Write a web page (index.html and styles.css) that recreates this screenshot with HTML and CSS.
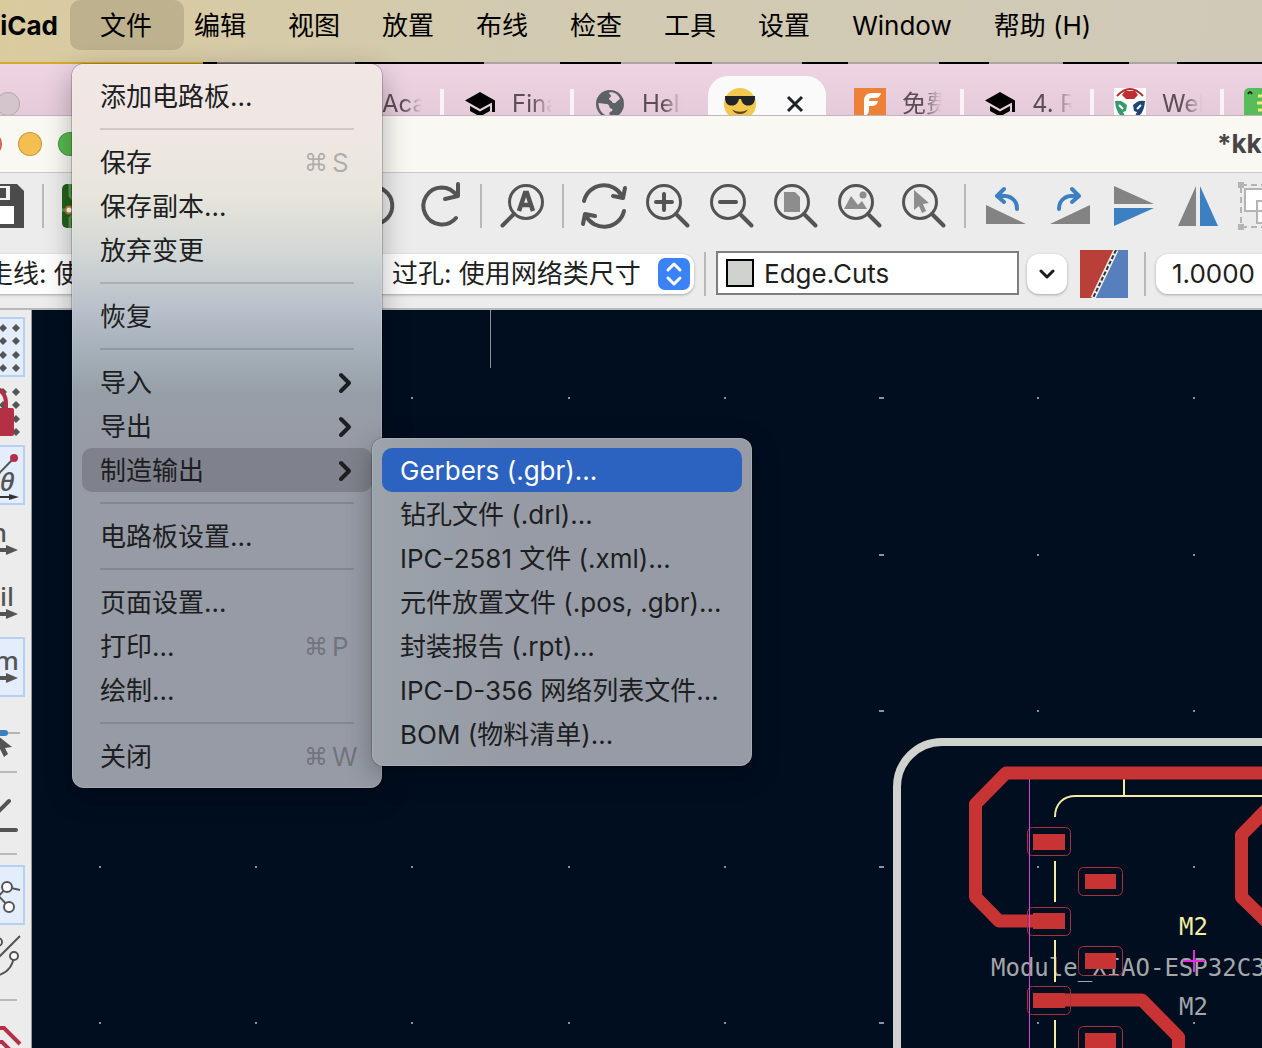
FILE: index.html
```html
<!DOCTYPE html>
<html lang="zh-CN">
<head>
<meta charset="utf-8">
<title>KiCad</title>
<link rel="stylesheet" href="styles.css">
</head>
<body>
<svg class="defs" aria-hidden="true">
  <defs>
    <symbol id="lens" viewBox="0 0 48 48"><circle cx="20" cy="20" r="16.500" fill="none" stroke="#545454" stroke-width="3"/><path d="M32 32 43.500 43.500" stroke="#545454" stroke-width="4" stroke-linecap="round"/></symbol>
    <symbol id="cap" viewBox="0 0 32 32"><path d="M16 4 31 12.500V24H28V14.500L16 21 1 12.500Z M6 18 16 23.500 26 18V23L16 28.500 6 23Z" fill="#000"/></symbol>
    <symbol id="chev" viewBox="0 0 16 24"><path d="M3 4 11 12 3 20" fill="none" stroke="#1c1e21" stroke-width="4" stroke-linecap="round" stroke-linejoin="round"/></symbol>
  </defs>
</svg>

<nav class="menubar" aria-label="菜单栏">
  <button class="menubar-item app">KiCad</button>
  <div class="menubar-entry">
    <button class="menubar-item open">文件</button>
    <div class="menu file-menu">
      <button class="item">添加电路板...</button>
      <hr>
      <button class="item">保存<span class="keys"><span class="cmd">⌘</span>S</span></button>
      <button class="item">保存副本...</button>
      <button class="item">放弃变更</button>
      <hr>
      <button class="item">恢复</button>
      <hr>
      <button class="item">导入<svg class="chev"><use href="#chev"/></svg></button>
      <button class="item">导出<svg class="chev"><use href="#chev"/></svg></button>
      <div class="sub-entry">
        <button class="item parent">制造输出<svg class="chev"><use href="#chev"/></svg></button>
        <div class="menu submenu">
          <button class="item selected">Gerbers (.gbr)...</button>
          <button class="item">钻孔文件 (.drl)...</button>
          <button class="item">IPC-2581 文件 (.xml)...</button>
          <button class="item">元件放置文件 (.pos, .gbr)...</button>
          <button class="item">封装报告 (.rpt)...</button>
          <button class="item">IPC-D-356 网络列表文件...</button>
          <button class="item">BOM (物料清单)...</button>
        </div>
      </div>
      <hr>
      <button class="item">电路板设置...</button>
      <hr>
      <button class="item">页面设置...</button>
      <button class="item">打印...<span class="keys"><span class="cmd">⌘</span>P</span></button>
      <button class="item">绘制...</button>
      <hr>
      <button class="item">关闭<span class="keys"><span class="cmd">⌘</span>W</span></button>
    </div>
  </div>
  <button class="menubar-item">编辑</button>
  <button class="menubar-item">视图</button>
  <button class="menubar-item">放置</button>
  <button class="menubar-item">布线</button>
  <button class="menubar-item">检查</button>
  <button class="menubar-item">工具</button>
  <button class="menubar-item">设置</button>
  <button class="menubar-item">Window</button>
  <button class="menubar-item">帮助 (H)</button>
</nav>

<div class="tabstrip">
  <span class="browser-dot"></span>
  <div class="tab first"><span class="tab-title">Aca</span></div>
  <div class="tab"><svg class="favicon"><use href="#cap"/></svg><span class="tab-title">Fina</span></div>
  <div class="tab last"><svg class="favicon" viewBox="0 0 32 32"><circle cx="16" cy="16" r="14" fill="#5c6166"/><path d="M15 4.500c5-1 9 2 11 6-1 2-3 2-4 4-1 1-4 1-4-1 0-1-3-1-3-3 0-1 2-1 2-3 0-1-2-1-2-3zM4.500 15c3 0 5 1 8 1 2 0 3 2 3 3 0 2 3 1 3 3s-3 1-3 3v3c-6 0-11-6-11-13z" fill="#e8cfdd"/></svg><span class="tab-title">Help</span></div>
  <div class="tab active"><svg class="favicon" viewBox="0 0 32 32"><circle cx="16" cy="16" r="16" fill="#f2c84f"/><path d="M1 8H31V11C30 16 28 17.500 24 17.500 20 17.500 18 15 17 11H15C14 15 12 17.500 8 17.500 4 17.500 2 16 1 11Z" fill="#222427"/><path d="M8 21.500Q16 26 24 21.500 21 26 16 26 11 26 8 21.500Z" fill="#5f4416"/></svg><button class="tab-close" aria-label="关闭标签页"><svg viewBox="0 0 18 18"><path d="M2 2 16 16M16 2 2 16" stroke="#202124" stroke-width="3"/></svg></button></div>
  <div class="tab"><svg class="favicon" viewBox="0 0 32 32"><path d="M0 0H32V32H0Z" fill="#ee8138"/><path d="M10 28V13Q10 5 18 5H27Q26 10 21 10H17Q15 10 15 13H24Q23 18 18 18H15V22Q15 27 10 28Z" fill="#fff"/></svg><span class="tab-title">免费</span></div>
  <div class="tab"><svg class="favicon"><use href="#cap"/></svg><span class="tab-title">4. R</span></div>
  <div class="tab"><svg class="favicon" viewBox="0 0 32 32"><path d="M0 0H32V32H0Z" fill="#fff"/><path d="M3 8Q16-6 29 8" fill="none" stroke="#b52c30" stroke-width="2"/><path d="M11 3h10l3 4-4 4h-8l-4-4z" fill="#bf2d30"/><path d="M1 13q5-1 8 1l4 3-1 6-3 1 3 6q-10-2-11-17z" fill="#389a69"/><path d="M31 13q-5-1-8 1l-4 3 1 6 3 1-3 6q10-2 11-17z" fill="#1f4473"/><path d="M5 17l4 4M27 17l-4 4" fill="none" stroke="#fff" stroke-width="2"/></svg><span class="tab-title">Wel</span></div>
  <div class="tab"><svg class="favicon" viewBox="0 0 32 32"><rect width="32" height="32" rx="5" fill="#57bd5b"/><path d="M4 6q2-4 4 0" fill="none" stroke="#222" stroke-width="2"/><path d="M14 8h6M13 15h8M14 22h6" stroke="#f4ed71" stroke-width="3"/></svg></div>
</div>

<header class="titlebar">
  <div class="lights"><button class="light red" aria-label="关闭"></button><button class="light yellow" aria-label="最小化"></button><button class="light green" aria-label="缩放"></button></div>
  <h1 class="title">*kka</h1>
</header>

<div class="toolbar icons">
  <button class="tool" aria-label="保存"><svg viewBox="0 0 48 48"><path d="M4 2H39L46 9V46H4Z" fill="#4b4b4b"/><path d="M12 4H32V18H12Z" fill="#f4f4f4"/><path d="M22 6H28V16H22Z" fill="#4b4b4b"/><path d="M10 24H36V42H10Z" fill="#fff"/></svg></button>
  <span class="sep"></span>
  <button class="tool" aria-label="电路板设置"><svg viewBox="0 0 48 48"><rect x="2" y="2" width="44" height="44" rx="5" fill="#23611c"/><path d="M10 2V14L14 18M2 28H9M10 46V36L14 32" fill="none" stroke="#5b9a4d" stroke-width="3"/><circle cx="9" cy="28" r="3.500" fill="#fff" stroke="#c07a3a" stroke-width="2"/></svg></button>
  <button class="tool undo" aria-label="撤消"><svg viewBox="0 0 48 48"><path d="M6 2V14L19 17M6 14A18.500 18.500 0 1 1 8 36" fill="none" stroke="#545454" stroke-width="4" stroke-linecap="round"/></svg></button>
  <button class="tool" aria-label="重做"><svg viewBox="0 0 48 48"><path d="M42 2V14L29 17M41 14C37 8 32 5.500 25.500 5.500A18.500 18.500 0 1 0 40 36" fill="none" stroke="#545454" stroke-width="4" stroke-linecap="round" stroke-linejoin="round"/></svg></button>
  <span class="sep"></span>
  <button class="tool" aria-label="查找"><svg viewBox="0 0 48 48"><circle cx="28" cy="20" r="16.500" fill="none" stroke="#545454" stroke-width="3"/><path d="M16 32 4.500 43.500" stroke="#545454" stroke-width="4" stroke-linecap="round"/><path d="M21 29 27 11H29L35 29M23 23H33" fill="none" stroke="#545454" stroke-width="4.500"/></svg></button>
  <span class="sep"></span>
  <button class="tool" aria-label="刷新"><svg viewBox="0 0 48 48"><g fill="none" stroke="#545454" stroke-width="4" stroke-linecap="round" stroke-linejoin="round"><path d="M4 19A20.500 20.500 0 0 1 42 14M45 6 43 16 33 14"/><path d="M44 29A20.500 20.500 0 0 1 6 34M3 42 5 32 15 34"/></g></svg></button>
  <button class="tool" aria-label="放大"><svg viewBox="0 0 48 48"><use href="#lens"/><path d="M20 12V28M12 20H28" stroke="#545454" stroke-width="4" stroke-linecap="round"/></svg></button>
  <button class="tool" aria-label="缩小"><svg viewBox="0 0 48 48"><use href="#lens"/><path d="M12 20H28" stroke="#545454" stroke-width="4" stroke-linecap="round"/></svg></button>
  <button class="tool" aria-label="缩放到页面"><svg viewBox="0 0 48 48"><use href="#lens"/><path d="M12 10H23L28 15V30H12Z" fill="#8d8d8d"/></svg></button>
  <button class="tool" aria-label="缩放到对象"><svg viewBox="0 0 48 48"><use href="#lens"/><path d="M8 27 15 14 22 23 26 19 31 27Z" fill="#8d8d8d"/><circle cx="27" cy="13" r="3.500" fill="#8d8d8d"/></svg></button>
  <button class="tool" aria-label="缩放到所选"><svg viewBox="0 0 48 48"><use href="#lens"/><path d="M14 8V28L19 24 22 31 26 29 23 22 29 21Z" fill="#8d8d8d"/></svg></button>
  <span class="sep"></span>
  <button class="tool" aria-label="逆时针旋转"><svg viewBox="0 0 48 48"><path d="M4 23V42H44Z" fill="#838383"/><path d="M35 27C35 18 29 13 17 14M22 7 15 14 22 20" fill="none" stroke="#3d80c2" stroke-width="4" stroke-linecap="round" stroke-linejoin="round"/></svg></button>
  <button class="tool" aria-label="顺时针旋转"><svg viewBox="0 0 48 48"><path d="M44 23V42H4Z" fill="#838383"/><path d="M13 27C13 18 19 13 31 14M26 7 33 14 26 20" fill="none" stroke="#3d80c2" stroke-width="4" stroke-linecap="round" stroke-linejoin="round"/></svg></button>
  <button class="tool" aria-label="垂直镜像"><svg viewBox="0 0 48 48"><path d="M4 4 44 22H4Z" fill="#838383"/><path d="M4 26H44L4 44Z" fill="#3d80c2"/></svg></button>
  <button class="tool" aria-label="水平镜像"><svg viewBox="0 0 48 48"><path d="M22 4V44H4Z" fill="#838383"/><path d="M26 4V44H44Z" fill="#3d80c2"/></svg></button>
  <button class="tool" aria-label="组合"><svg viewBox="0 0 48 48"><rect x="3" y="3" width="42" height="42" fill="none" stroke="#b4b4b4" stroke-width="2" stroke-dasharray="6 4"/><path d="M0 0H6V6H0ZM0 42H6V48H0ZM42 0H48V6H42Z" fill="#b4b4b4"/><path d="M7 7H30V29H7ZM19 19H42V41H19Z" fill="#fff" stroke="#b4b4b4" stroke-width="2"/></svg></button>
</div>

<div class="toolbar fields">
  <label class="combo track"><select aria-label="走线宽度"><option>走线: 使用网络类宽度</option></select></label>
  <label class="combo via"><select aria-label="过孔尺寸"><option>过孔: 使用网络类尺寸</option></select><svg class="stepper" viewBox="0 0 32 32"><rect width="32" height="32" rx="7" fill="#3b82f6"/><path d="M10 12 16 6 22 12M10 20 16 26 22 20" fill="none" stroke="#fff" stroke-width="3" stroke-linecap="round" stroke-linejoin="round"/></svg></label>
  <span class="sep"></span>
  <label class="layer"><span class="swatch"></span><input value="Edge.Cuts" aria-label="图层"></label>
  <button class="drop" aria-label="选择图层"><svg viewBox="0 0 16 16"><path d="M2 5 8 11 14 5" fill="none" stroke="#1c1c1c" stroke-width="3" stroke-linecap="round" stroke-linejoin="round"/></svg></button>
  <button class="tool pair" aria-label="层对"><svg viewBox="0 0 48 48"><path d="M0 0H36L12 48H0Z" fill="#b84038"/><path d="M36 0H48V48H14Z" fill="#577fbe"/><path d="M36 0 13 48" stroke="#eee" stroke-width="5"/><path d="M36 0 13 48" stroke="#333" stroke-width="2" stroke-dasharray="4 2"/></svg></button>
  <span class="sep"></span>
  <label class="combo grid"><select aria-label="网格"><option>1.0000 mm</option></select></label>
</div>

<main class="editor">
  <aside class="side">
    <button class="side-tool on" aria-label="显示网格"><svg viewBox="-35 0 60 60"><g id="dots" fill="#545454"><path d="M-1 11 3 7 7 11 3 15ZM12 11 16 7 20 11 16 15ZM-1 24 3 20 7 24 3 28ZM12 24 16 20 20 24 16 28ZM-1 38 3 34 7 38 3 42ZM12 38 16 34 20 38 16 42ZM-1 51 3 47 7 51 3 55ZM12 51 16 47 20 51 16 55Z"/></g></svg></button>
    <button class="side-tool" aria-label="网格覆盖"><svg viewBox="-35 0 60 60"><use href="#dots"/><path d="M-14 29V22A10 14 0 0 1 6 22V29" fill="none" stroke="#b33045" stroke-width="4"/><rect x="-24" y="27" width="38" height="28" rx="2" fill="#b33045"/></svg></button>
    <button class="side-tool on" aria-label="极坐标"><svg viewBox="-35 0 60 60"><path d="M-20 48 14 13" stroke="#545454" stroke-width="2"/><circle cx="14" cy="13" r="4" fill="#b33045"/><path d="M-25 52H12" stroke="#333" stroke-width="2"/><path d="M9 49 19 52 9 55Z" fill="#333"/><text class="theta" x="0" y="46">θ</text></svg></button>
    <button class="side-tool" aria-label="英寸"><svg viewBox="-35 0 60 60"><text class="unit" x="7" y="33" text-anchor="end">in</text><path d="M-25 41H8" stroke="#545454" stroke-width="4"/><path d="M6 36 18 41 6 46Z" fill="#545454"/></svg></button>
    <button class="side-tool" aria-label="密耳"><svg viewBox="-35 0 60 60"><text class="unit" x="14" y="33" text-anchor="end">mil</text><path d="M-25 41H8" stroke="#545454" stroke-width="4"/><path d="M6 36 18 41 6 46Z" fill="#545454"/></svg></button>
    <button class="side-tool on" aria-label="毫米"><svg viewBox="-35 0 60 60"><text class="unit" x="19" y="33" text-anchor="end">mm</text><path d="M-25 41H8" stroke="#545454" stroke-width="4"/><path d="M6 36 18 41 6 46Z" fill="#545454"/></svg></button>
    <button class="side-tool" aria-label="十字光标"><svg viewBox="-35 0 60 60"><path d="M-25 32H20" stroke="#b4b4b4" stroke-width="2"/><path d="M-8 32H5" stroke="#3d80c2" stroke-width="6" stroke-linecap="round"/><path d="M-3 34 12 46 5 47 8 53 4 56 0 48-3 51Z" fill="#545454"/></svg></button>
    <hr>
    <button class="side-tool" aria-label="角度限制"><svg viewBox="-35 0 60 60"><path d="M-20 47H16M-20 47 9 18" stroke="#545454" stroke-width="4" stroke-linecap="round"/></svg></button>
    <hr>
    <button class="side-tool on" aria-label="飞线"><svg viewBox="-35 0 60 60"><path d="M-15 46 7 22 20 25M-6 26 9 42" stroke="#545454" stroke-width="2" fill="none"/><g fill="#fff" stroke="#545454" stroke-width="2"><circle cx="7" cy="22" r="5"/><circle cx="9" cy="42" r="5"/></g></svg></button>
    <button class="side-tool" aria-label="曲线飞线"><svg viewBox="-35 0 60 60"><path d="M-15 42 20 7M14 27Q12 44-5 47" stroke="#545454" stroke-width="2" fill="none"/><g fill="#fff" stroke="#545454" stroke-width="2"><circle cx="-2" cy="13" r="4"/><circle cx="14" cy="27" r="4"/></g></svg></button>
    <hr>
    <button class="side-tool" aria-label="网络高亮"><svg viewBox="-35 0 60 60"><path d="M-20 17H4L20 33M-20 31H2L18 47" stroke="#b33045" stroke-width="4" fill="none"/></svg></button>
  </aside>
  <svg class="canvas" role="img" aria-label="电路板">
    <defs>
      <g id="gridrow"><path d="M99 0h2M255 0h2M411 0h2M568 0h2M724 0h2M879 0h5M1037 0h2M1193 0h2" stroke="#8b9299" stroke-width="2"/></g>
    </defs>
    <g transform="translate(-32 -310)">
      <use href="#gridrow" y="398"/><use href="#gridrow" y="555"/><use href="#gridrow" y="711"/><use href="#gridrow" y="867"/><use href="#gridrow" y="1023"/>
      <path d="M490.500 310V368" stroke="#8b9299"/>
      <path d="M1400 742H942A45 45 0 0 0 897 787V1400" fill="none" stroke="#d0d2cd" stroke-width="8"/>
      <text class="silk" x="991" y="976">Module_XIAO-ESP32C3_M2</text>
      <text class="silk" x="1179" y="1015">M2</text>
      <text class="silk silk-top" x="1179" y="935">M2</text>
      <path d="M1055 817C1055 804 1063 796 1076 796H1400M1124 779V796M1055 861V902M1055 940V982M1055 1020V1062" fill="none" stroke="#f2eda1" stroke-width="2"/>
      <g fill="none" stroke="#c83434" stroke-width="13" stroke-linejoin="round">
        <path d="M1400 773H1006L975.500 804V897L999 921H1050"/>
        <path d="M1270 806 1241.500 835V897L1270 925"/>
        <path d="M1048 1000H1142L1178.500 1037V1100"/>
      </g>
      <path d="M1033 834h32v16h-32zM1033 913h32v16h-32zM1033 993h32v15h-32zM1085 874h31v15h-31zM1085 953h31v16h-31zM1085 1033h31v16h-31z" fill="#c83434"/>
      <g fill="none" stroke="#a8313c">
        <rect x="1027.500" y="827.500" width="43" height="28" rx="5"/><rect x="1027.500" y="907.500" width="43" height="28" rx="5"/><rect x="1027.500" y="986.500" width="43" height="28" rx="5"/>
        <rect x="1078.500" y="867.500" width="44" height="28" rx="5"/><rect x="1078.500" y="946.500" width="44" height="29" rx="5"/><rect x="1078.500" y="1026.500" width="44" height="28" rx="5"/>
      </g>
      <path d="M1029.500 779V1400" stroke="#d045d4"/>
      <path d="M1183 961H1205M1194 950V972" stroke="#e62bd8" stroke-width="2"/>
    </g>
  </svg>
</main>
</body>
</html>
```
FILE: styles.css
```css
* { box-sizing: border-box; }

html, body { height: 100%; }

body {
  margin: 0;
  display: flex;
  flex-direction: column;
  overflow: hidden;
  background: #ececec;
  color: #1f1f1f;
  font: 26px/32px Inter, "Noto Sans CJK SC", sans-serif;
}

button, input, select {
  margin: 0;
  padding: 0;
  border: 0;
  background: none;
  color: inherit;
  font: inherit;
  appearance: none;
}

svg { display: block; }
.defs { position: absolute; width: 0; height: 0; }

/* Menu bar */
.menubar {
  position: relative;
  z-index: 2;
  display: flex;
  flex: none;
  height: 64px;
  padding-bottom: 14px;
  background: linear-gradient(100deg, #dacb9f, #d2cab0 40%, #d0c9b8);
  color: #000;
  white-space: nowrap;
}

.menubar::after {
  content: "";
  position: absolute;
  inset: auto 0 0 0;
  height: 2px;
  background: linear-gradient(90deg, #d8a828 203px, #000 203px 217px, #77757a 217px 355px, #000 355px 484px, #aaa4a2 484px 560px, #000 560px 621px, #aaa4a2 621px 675px, #000 675px 712px, #aaa4a2 712px 802px, #000 802px 848px, #aaa4a2 848px 939px, #000 939px 989px, #aaa4a2 989px 1063px, #000 1063px 1129px, #aaa4a2 1129px 1177px, #000 1177px);
}

.menubar-item { height: 50px; padding: 2px 21px 0; }
.menubar-item.app { width: 79px; padding: 2px 21px 0 0; direction: rtl; font-weight: 700; overflow: hidden; }
.menubar-entry { position: relative; margin: 0 -11px 0 -9px; }
.menubar-item.open { padding: 2px 32px 0 30px; border-radius: 10px; background: #bdb18e; }

/* Menus */
.menu {
  position: absolute;
  padding: 10px;
  border-radius: 12px;
  box-shadow: 0 0 0 1px rgba(0, 0, 0, .2), inset 0 0 0 1px rgba(255, 255, 255, .15), 0 8px 28px rgba(0, 0, 0, .3);
  color: #1c1e21;
}

.file-menu {
  top: 64px;
  left: 2px;
  z-index: 3;
  width: 310px;
  background: linear-gradient(#f1e6e4 0, #efe7e3 70px, #e8e5dc 130px, #d4d8d6 185px, #b8c0ca 245px, #a2adb6 295px, #969fa8 330px, #979ba5 370px);
}

.submenu {
  top: -10px;
  left: 290px;
  width: 380px;
  background: linear-gradient(90deg, #9ba3ab, #979ba5 35%);
}

.item {
  display: flex;
  align-items: center;
  width: 100%;
  height: 44px;
  padding: 2px 18px 0;
  border-radius: 10px;
  text-align: left;
  white-space: nowrap;
}

.item.parent { background: #7f828c; }
.item.selected { background: #2d63c0; color: #fff; }
.sub-entry { position: relative; }

.menu hr {
  height: 2px;
  margin: 10px 18px;
  border: 0;
  background: rgba(0, 0, 0, .13);
}

.keys { display: flex; width: 50px; margin-left: auto; color: rgba(0, 0, 0, .27); }
.cmd { flex: none; width: 28px; font: 24px/32px "DejaVu Sans", sans-serif; }
.chev { width: 16px; height: 24px; margin-left: auto; }

/* Browser tabs */
.tabstrip {
  display: flex;
  flex: none;
  height: 52px;
  overflow: hidden;
  border-bottom: 1px solid #c4b3bd;
  background: linear-gradient(#efd5e4, #e5cad9);
  color: #5b4c56;
  font-size: 24px;
}

.browser-dot {
  flex: none;
  width: 24px;
  height: 24px;
  margin: 28px 322px 0 -4px;
  border: 1px solid #b5a5ae;
  border-radius: 50%;
  background: #d4c5cd;
}

.tab {
  position: relative;
  display: flex;
  flex: none;
  gap: 16px;
  width: 130px;
  padding: 24px 22px 0 20px;
}

.tab::after { content: ""; position: absolute; top: 25px; right: 0; width: 4px; height: 40px; background: #f8f3f6; }
.tab.first { width: 102px; padding-left: 40px; }
.tab.last::after, .tab.active::after { display: none; }
.favicon { flex: none; width: 32px; height: 32px; }
.tab-title {
  width: 40px;
  overflow: hidden;
  white-space: nowrap;
  mask-image: linear-gradient(90deg, #000 50%, transparent);
}
.tab.active { width: 118px; margin: 12px 8px 0 4px; padding: 12px 16px; gap: 30px; border-radius: 20px 20px 0 0; background: #fbfafb; }
.tab-close { width: 18px; height: 32px; }
.tab-close svg { width: 18px; height: 18px; }

/* Window title */
.titlebar {
  display: flex;
  flex: none;
  align-items: center;
  justify-content: space-between;
  height: 57px;
  border-bottom: 1px solid #c9c9c6;
  background: #f9f8f3;
}

.lights { display: flex; gap: 16px; margin-left: -22px; }
.light { width: 24px; height: 24px; border: 1px solid rgba(0, 0, 0, .2); border-radius: 50%; }
.red { background: #ed6a5f; }
.yellow { background: #f4bf50; }
.green { background: #58b94e; }
.title { width: 45px; margin: 0; overflow: hidden; color: #464646; font-size: 26px; font-weight: 700; white-space: nowrap; }

/* Toolbars */
.toolbar { display: flex; flex: none; overflow: hidden; }
.icons { gap: 16px; height: 75px; padding-top: 9px; margin-left: -22px; }
.tool { flex: none; width: 48px; height: 48px; }
.tool svg { width: 48px; height: 48px; }
.undo { margin-left: 228px; }
.sep { flex: none; width: 2px; height: 44px; margin-top: 2px; background: #b9b9b9; }

.fields { height: 60px; padding-top: 2px; }
.combo, .drop {
  display: flex;
  flex: none;
  align-items: center;
  height: 40px;
  margin-top: 4px;
  border-radius: 12px;
  background: #fff;
  box-shadow: 0 1px 3px rgba(0, 0, 0, .3);
}
.combo select { flex: 1; min-width: 0; padding: 0 18px; }
.track { width: 380px; margin-left: -31px; }
.via { width: 329px; margin: 4px 10px 0 16px; padding-right: 4px; }
.via select { padding: 0 0 0 27px; }
.stepper { flex: none; width: 32px; height: 32px; }
.layer {
  display: flex;
  flex: none;
  align-items: center;
  gap: 10px;
  width: 303px;
  height: 44px;
  margin: 1px 8px 0 10px;
  padding-left: 8px;
  border: 2px solid #7e7e7e;
  background: #fff;
}
.swatch { width: 28px; height: 28px; border: 2px solid #000; background: #d0d2cd; }
.layer input { width: 200px; padding-top: 2px; }
.drop { justify-content: center; width: 40px; }
.drop svg { width: 16px; height: 16px; }
.pair { margin: 0 16px 0 13px; }
.grid { flex: 1 0 200px; margin-left: 10px; }
.grid select { padding: 0 16px; }

/* Editor */
.editor { display: flex; flex: 1; min-height: 0; border-top: 2px solid #b8b8b8; }

.side {
  flex: none;
  width: 32px;
  padding-top: 7px;
  overflow: hidden;
  border-right: 1px solid #9a9a9a;
}
.side-tool { display: block; width: 60px; height: 60px; margin: 0 0 4px -35px; }
.side-tool svg { width: 60px; height: 60px; }
.side-tool.on { background: #e3edfb; box-shadow: inset 0 0 0 2px #b7cff0; }
.side hr { height: 2px; margin: 10px 14px 10px 0; border: 0; background: #b9b9b9; }
.unit { fill: #545454; font: 500 26px "Noto Sans", sans-serif; }
.theta { fill: #545454; font: italic 500 26px "Noto Sans", sans-serif; }

.canvas { flex: 1; min-width: 0; height: 100%; background: #000e20; }
.silk { fill: #a3a7aa; font: 24px "DejaVu Sans Mono", monospace; }
.silk-top { fill: #f2eda1; }
```
